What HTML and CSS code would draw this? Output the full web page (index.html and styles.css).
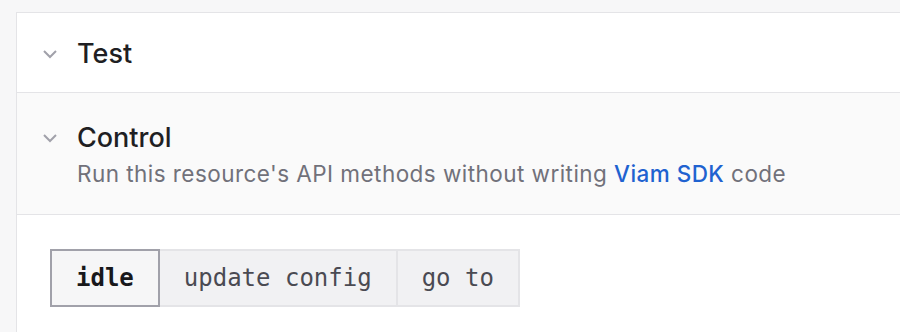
FILE: index.html
```html
<!DOCTYPE html>
<html>
<head>
<meta charset="utf-8">
<link rel="stylesheet" href="styles.css">
</head>
<body>
<div class="card">
  <div class="section section-test">
    <svg class="chev" width="16" height="10" viewBox="0 0 16 10"><path d="M2 2 L8 8 L14 2" fill="none" stroke="#a1a1aa" stroke-width="2"/></svg>
    <div class="head-text">
      <div class="title">Test</div>
    </div>
  </div>
  <div class="section section-control">
    <svg class="chev" width="16" height="10" viewBox="0 0 16 10"><path d="M2 2 L8 8 L14 2" fill="none" stroke="#a1a1aa" stroke-width="2"/></svg>
    <div class="head-text">
      <div class="title">Control</div>
      <div class="subtitle">Run this resource's API methods without writing <a class="link" href="#">Viam SDK</a> code</div>
    </div>
  </div>
  <div class="content">
    <div class="tabs">
      <button class="tab tab-active">idle</button>
      <button class="tab">update config</button>
      <button class="tab">go to</button>
    </div>
  </div>
</div>
</body>
</html>
```
FILE: styles.css
```css
html, body {
  margin: 0;
  padding: 0;
}
body {
  background: #f7f7f8;
  padding: 12px 0 0 16px;
  font-family: Inter, "Noto Sans", sans-serif;
  height: 332px;
  box-sizing: border-box;
  overflow: hidden;
}
.card {
  background: #ffffff;
  border-top: 1px solid #e4e4e7;
  border-left: 1px solid #e4e4e7;
  height: 320px;
}
.section {
  display: flex;
  align-items: flex-start;
  padding-left: 25px;
  border-bottom: 1px solid #e4e4e7;
  box-sizing: border-box;
}
.section-test {
  height: 80px;
  padding-top: 22px;
  background: #ffffff;
}
.section-control {
  height: 122px;
  padding-top: 26px;
  background: #fafafa;
}
.chev {
  margin-top: 14px;
  flex: none;
}
.head-text {
  margin-left: 19px;
  display: flex;
  flex-direction: column;
}
.title {
  font-size: 27px;
  font-weight: 500;
  color: #1f1f23;
  line-height: 38px;
}
.subtitle {
  margin-top: 3px;
  font-size: 22.5px;
  letter-spacing: 0.45px;
  color: #71717a;
  line-height: 28px;
}
.link {
  color: #1f62d0;
  text-decoration: none;
  font-weight: 500;
}
.content {
  padding: 34px 0 0 33px;
}
.tabs {
  display: flex;
}
.tab {
  font-family: "DejaVu Sans Mono", "Liberation Mono", monospace;
  font-size: 24px;
  color: #4a4a52;
  background: #f1f1f3;
  border: 2px solid #e4e4e7;
  height: 58px;
  padding: 0 24px;
  margin: 0;
  margin-left: -2px;
  cursor: pointer;
}
.tab-active {
  margin-left: 0;
  background: #f6f6f7;
  border-color: #a1a1aa;
  color: #18181b;
  font-weight: 700;
  position: relative;
  z-index: 1;
}
```
